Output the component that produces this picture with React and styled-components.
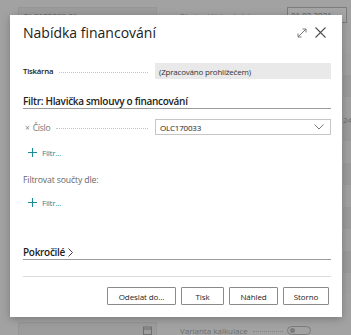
import styled, { createGlobalStyle } from "styled-components";

const GlobalStyle = createGlobalStyle`
  * { box-sizing: border-box; }
  html, body { margin: 0; padding: 0; }
  body {
    font-family: "Open Sans", "Noto Sans", sans-serif;
    width: 351px;
    height: 335px;
    overflow: hidden;
    background: #a4a4a4;
  }
`;

const App = () => {
  return (
    <Page>
      <GlobalStyle />
      <Backdrop>
        <BgRow>
          <BgField>OLC170033-01</BgField>
          <BgLabel>Předpokládané datum z</BgLabel>
          <BgInput>01.02.2021</BgInput>
        </BgRow>
        <BgStrip>
          <span>24</span>
        </BgStrip>
        <BgRow>
          <BgField>
            <CalendarIcon />
          </BgField>
          <BgLabel>
            Varianta kalkulace
            <BgLeader />
          </BgLabel>
          <BgToggle />
        </BgRow>
      </Backdrop>

      <Dialog>
        <Header>
          <Title>Nabídka financování</Title>
          <HeaderIcons>
            <svg width="10" height="10" viewBox="0 0 10 10" fill="none" stroke="#7a7a7a" strokeWidth="1">
              <path d="M1 9 L9 1 M5.5 1 H9 V4.5 M1 5.5 V9 H4.5" />
            </svg>
            <svg width="11" height="11" viewBox="0 0 11 11" fill="none" stroke="#505050" strokeWidth="1.1">
              <path d="M0.5 0.5 L10.5 10.5 M10.5 0.5 L0.5 10.5" />
            </svg>
          </HeaderIcons>
        </Header>

        <FieldRow top={13}>
          <Label strong>Tiskárna</Label>
          <Leader />
          <ReadOnlyBox>(Zpracováno prohlížečem)</ReadOnlyBox>
        </FieldRow>

        <SectionTitle top={16}>Filtr: Hlavička smlouvy o financování</SectionTitle>

        <FieldRow top={10}>
          <Label>
            <Remove>×</Remove>Číslo
          </Label>
          <Leader />
          <SelectBox>
            <span>OLC170033</span>
            <svg width="10" height="6" viewBox="0 0 10 6" fill="none" stroke="#7a7a7a" strokeWidth="1">
              <path d="M0.5 0.5 L5 5 L9.5 0.5" />
            </svg>
          </SelectBox>
        </FieldRow>

        <AddFilter top={11}>
          <Plus />
          Filtr...
        </AddFilter>

        <Caption>Filtrovat součty dle:</Caption>

        <AddFilter top={10}>
          <Plus />
          Filtr...
        </AddFilter>

        <SectionTitle top={38}>
          Pokročilé
          <svg viewBox="0 0 5 9" width="5" height="9">
            <path d="M0.5 0.5 L4.5 4.5 L0.5 8.5" fill="none" stroke="#444" strokeWidth="1" />
          </svg>
        </SectionTitle>

        <Footer>
          <Button w={69}>Odeslat do...</Button>
          <Button w={43}>Tisk</Button>
          <Button w={49}>Náhled</Button>
          <Button w={46}>Storno</Button>
        </Footer>
      </Dialog>
    </Page>
  );
};

export default App;

const Plus = () => (
  <svg width="9" height="9" viewBox="0 0 9 9" fill="none" stroke="#1b8a96" strokeWidth="1.1">
    <path d="M4.5 0 V9 M0 4.5 H9" />
  </svg>
);

const CalendarIcon = () => (
  <svg width="9" height="9" viewBox="0 0 9 9" fill="none" stroke="#6a6a6a" strokeWidth="0.9">
    <rect x="0.5" y="1" width="8" height="7.5" />
    <path d="M0.5 3 H8.5" />
  </svg>
);

/* ---------------------------- STYLED COMPONENTS --------------------------- */

const Page = styled.div`
  position: relative;
  width: 351px;
  height: 335px;
  overflow: hidden;
`;

const Backdrop = styled.div`
  height: 100%;
  display: flex;
  flex-direction: column;
  padding: 7px 0 0 18px;
  background: #a2a2a2;
`;

const BgRow = styled.div`
  display: flex;
  align-items: center;
  height: 16px;
  flex-shrink: 0;
  font-size: 8px;
  color: #6e6e6e;
`;

const BgField = styled.div`
  width: 139px;
  height: 16px;
  background: #9c9c9c;
  border: 1px solid #969696;
  padding: 0 4px;
  display: flex;
  align-items: center;
  color: #606060;
  svg { margin-left: auto; }
`;

const BgLabel = styled.div`
  margin-left: 23px;
  width: 107px;
  white-space: nowrap;
  overflow: hidden;
  display: flex;
  align-items: center;
`;

const BgLeader = styled.div`
  flex: 1;
  margin: 2px 4px 0 5px;
  border-bottom: 1px dotted #848484;
`;

const BgInput = styled.div`
  width: 60px;
  height: 16px;
  border: 1px solid #7c7c7c;
  background: #a6a6a6;
  padding: 0 3px;
  line-height: 14px;
  color: #5c5c5c;
`;

const BgToggle = styled.div`
  width: 24px;
  height: 9px;
  border: 1px solid #7c7c7c;
  border-radius: 5px;
  position: relative;
  &::after {
    content: "";
    position: absolute;
    left: 2px;
    top: 1px;
    width: 5px;
    height: 5px;
    border-radius: 50%;
    background: #7c7c7c;
  }
`;

const BgStrip = styled.div`
  align-self: flex-end;
  flex-shrink: 0;
  width: 8px;
  height: 240px;
  margin: 30px 0 29px;
  background: repeating-linear-gradient(#a0a0a0 0 22px, #9a9a9a 22px 44px);
  font-size: 8px;
  color: #707070;
  padding-top: 61px;
  line-height: 12px;
`;

const Dialog = styled.div`
  position: absolute;
  left: 10px;
  top: 15px;
  width: 332px;
  background: #fff;
  box-shadow: 0 2px 8px rgba(0, 0, 0, 0.25);
  display: flex;
  flex-direction: column;
  padding: 0 11px 12px 13px;
`;

const Header = styled.div`
  height: 35px;
  display: flex;
  align-items: center;
  justify-content: space-between;
`;

const Title = styled.div`
  font-size: 14px;
  color: #212121;
`;

const HeaderIcons = styled.div`
  display: flex;
  align-items: center;
  gap: 8px;
  padding-right: 5px;
`;

const FieldRow = styled.div`
  display: flex;
  align-items: center;
  height: 16px;
  margin-top: ${p => p.top || 0}px;
`;

const Label = styled.div`
  font-size: ${p => (p.strong ? 7.8 : 8.5)}px;
  letter-spacing: ${p => (p.strong ? -0.25 : -0.2)}px;
  color: ${p => (p.strong ? "#1a1a1a" : "#737373")};
  font-weight: ${p => (p.strong ? 600 : 400)};
  white-space: nowrap;
`;

const Remove = styled.span`
  color: #8a8a8a;
  margin: 0 3px 0 2px;
`;

const Leader = styled.div`
  flex: 1;
  margin: 2px 7px 0 6px;
  border-bottom: 1px dotted #c4c4c4;
`;

const ReadOnlyBox = styled.div`
  width: 176px;
  height: 16px;
  background: #e9e9e9;
  font-size: 8px;
  letter-spacing: -0.2px;
  color: #333;
  padding: 0 4px;
  display: flex;
  align-items: center;
`;

const SelectBox = styled(ReadOnlyBox)`
  background: #fff;
  border: 1px solid #c6c6c6;
  justify-content: space-between;
  padding: 0 6px 0 4px;
  color: #222;
`;

const SectionTitle = styled.div`
  margin-top: ${p => p.top}px;
  font-size: 10px;
  line-height: 13px;
  letter-spacing: -0.3px;
  font-weight: 600;
  color: #222;
  border-bottom: 1px solid #9a9a9a;
  display: flex;
  align-items: center;
  gap: 3px;
`;

const AddFilter = styled.div`
  margin-top: ${p => p.top}px;
  margin-left: 5px;
  height: 12px;
  display: flex;
  align-items: center;
  gap: 5px;
  font-size: 8px;
  letter-spacing: -0.2px;
  color: #1b8a96;
`;

const Caption = styled.div`
  margin-top: 16px;
  font-size: 8.7px;
  line-height: 12px;
  letter-spacing: -0.15px;
  color: #666;
`;

const Footer = styled.div`
  margin-top: 16px;
  border-top: 1px solid #dcdcdc;
  padding: 10px 2px 0 0;
  display: flex;
  justify-content: flex-end;
  gap: 5px;
`;

const Button = styled.button`
  width: ${p => p.w}px;
  height: 18px;
  padding: 0;
  background: #fff;
  border: 1px solid #8a8a8a;
  border-radius: 1px;
  font-family: inherit;
  font-size: 8px;
  letter-spacing: -0.1px;
  color: #222;
`;
